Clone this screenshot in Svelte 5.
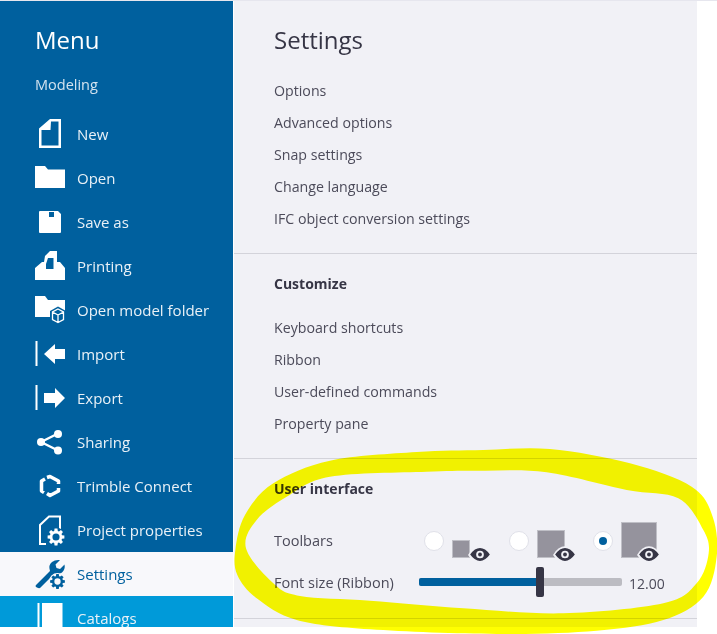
<script>
const menu = ['New', 'Open', 'Save as', 'Printing', 'Open model folder', 'Import', 'Export', 'Sharing', 'Trimble Connect', 'Project properties', 'Settings', 'Catalogs'];
const general = ['Options', 'Advanced options', 'Snap settings', 'Change language', 'IFC object conversion settings'];
const customize = ['Keyboard shortcuts', 'Ribbon', 'User-defined commands', 'Property pane'];
const toolbars = [
	{ size: 'small', checked: false },
	{ size: 'medium', checked: false },
	{ size: 'large', checked: true }
];

// freehand highlighter, points read off the reference
const outer = [[960,27],[760,30],[560,36],[300,62],[130,130],[45,225],[16,330],[22,405],[80,475],[200,540],[420,568],[800,582],[1100,572],[1300,540],[1420,470],[1460,350],[1448,230],[1385,140],[1200,70]];
const inner = [[950,97],[760,92],[590,95],[300,110],[170,170],[80,240],[48,325],[130,430],[210,468],[420,482],[700,505],[1000,520],[1300,490],[1400,430],[1436,340],[1420,270],[1345,175],[1190,150]];

function smooth(pts) {
	let d = `M${pts[0][0]} ${pts[0][1]}`;
	const n = pts.length;
	for (let i = 0; i < n; i++) {
		const p0 = pts[(i - 1 + n) % n], p1 = pts[i], p2 = pts[(i + 1) % n], p3 = pts[(i + 2) % n];
		const c1 = [p1[0] + (p2[0] - p0[0]) / 6, p1[1] + (p2[1] - p0[1]) / 6];
		const c2 = [p2[0] - (p3[0] - p1[0]) / 6, p2[1] - (p3[1] - p1[1]) / 6];
		d += `C${c1[0]} ${c1[1]} ${c2[0]} ${c2[1]} ${p2[0]} ${p2[1]}`;
	}
	return d + 'Z';
}
const highlight = smooth(outer) + smooth(inner);

// eight tooth gear with a round hole
function gearPath(cx, cy, r) {
	const hole = r * 0.42;
	let d = '';
	for (let i = 0; i < 8; i++) {
		const a = (i / 8) * Math.PI * 2;
		const w = 0.17;
		const pts = [[a - 0.39 + 0.1, r * 0.74], [a - w, r], [a + w, r], [a + 0.39 - 0.1, r * 0.74]];
		for (const [t, q] of pts) {
			d += `${d ? 'L' : 'M'}${(cx + Math.cos(t) * q).toFixed(2)} ${(cy + Math.sin(t) * q).toFixed(2)}`;
		}
	}
	d += `ZM${cx - hole} ${cy}a${hole} ${hole} 0 1 0 ${hole * 2} 0a${hole} ${hole} 0 1 0 ${-hole * 2} 0Z`;
	return d;
}
</script>

{#snippet gear(cx, cy, r, halo)}
	<circle cx={cx} cy={cy} r={r + 1} fill={halo} />
	<path d={gearPath(cx, cy, r)} fill-rule="evenodd" />
{/snippet}

{#snippet icon(name)}
	<svg class="icon" viewBox="0 0 30 30" width="30" height="30" fill="currentColor">
		{#if name === 'New'}
			<path fill-rule="evenodd" d="M15 0H26V29H4V9.500ZM16 2.500 15.500 11 6.500 11V26.500H23.500V2.500Z" />
		{:else if name === 'Open'}
			<path d="M0 3H10L13 6.500H30V25H0Z" />
		{:else if name === 'Save as'}
			<path fill-rule="evenodd" d="M5 4H23L26 7V25Q26 26 25 26H5Q4 26 4 25V5Q4 4 5 4ZM14 5V10H19V5Z" />
		{:else if name === 'Printing'}
			<path fill-rule="evenodd" d="M15 0H22V11H25L30 17V29H0V17L7 11H9L10 5ZM15.500 7H13L11 13V18H18.500V7Z" />
		{:else if name === 'Open model folder'}
			<path d="M0 1H10L13 5H30V22H0Z" />
			<path d="M23 11.500 31 16V25L23 30 15 25V16Z" fill="#00609e" />
			<path d="M23 14 28.500 17V24.500L23 27.500 17.500 24.500V17ZM23 20 28.500 17M23 20 17.500 17M23 20V27.500" fill="none" stroke="currentColor" stroke-width="1.300" />
		{:else if name === 'Import'}
			<rect x="0.500" y="2" width="2" height="25" />
			<path d="M9 15 20 5V10H30V20H20V25Z" />
		{:else if name === 'Export'}
			<rect x="0.500" y="2" width="2" height="25" />
			<path d="M9 10H20V5L30 15 20 25V20H9Z" />
		{:else if name === 'Sharing'}
			<path d="M6 15 23 6.500M6 15 23 23.500" stroke="currentColor" stroke-width="2.500" fill="none" />
			<circle cx="6" cy="15" r="4" />
			<circle cx="23" cy="7" r="4" />
			<circle cx="23" cy="23.500" r="4" />
		{:else if name === 'Trimble Connect'}
			<path d="M12 6.500 15 5.500 23.500 10V13M23.500 17V20L15 24.500 12 22.500M10 8 6.500 10V20L9 21.500" fill="none" stroke="currentColor" stroke-width="3.500" stroke-linejoin="round" />
		{:else if name === 'Project properties'}
			<path d="M25 14V1.500H14L5 10V29H11" fill="none" stroke="currentColor" stroke-width="2" />
			{@render gear(21, 22, 8.500, '#00609e')}
		{:else if name === 'Settings'}
			<path d="M1 26 15 12Q13 6 17 3 20 0.500 25 1L20.500 5.500 21.500 9 25 10 29.500 5.500Q30.500 10 27 13.500 23 16.500 18.500 15.500L5 29Q3 29.500 1 28 0 27 1 26Z" />
			{@render gear(22.500, 22.500, 7.500, '#f8f8fb')}
		{:else if name === 'Catalogs'}
			<rect x="2.500" y="0" width="2" height="30" />
			<rect x="7" y="0" width="20.500" height="30" />
		{/if}
	</svg>
{/snippet}

<div class="page">
	<aside class="sidebar">
		<h1>Menu</h1>
		<p class="context">Modeling</p>
		<ul>
			{#each menu as item}
				<li class:active={item === 'Settings'} class:next={item === 'Catalogs'}>
					{@render icon(item)}
					<span>{item}</span>
				</li>
			{/each}
		</ul>
	</aside>

	<main class="panel">
		<section class="first">
			<h2>Settings</h2>
			{#each general as link}
				<div class="link">{link}</div>
			{/each}
		</section>

		<section class="second">
			<h3>Customize</h3>
			{#each customize as link}
				<div class="link">{link}</div>
			{/each}
		</section>

		<section class="third">
			<h3>User interface</h3>
			<div class="toolbars">
				<span class="label">Toolbars</span>
				<div class="options">
					{#each toolbars as opt}
						<div class="option {opt.size}">
							<span class="radio" class:checked={opt.checked}></span>
							<span class="square">
								<svg class="eye" viewBox="0 0 28 19" width="24" height="17">
									<path d="M0 10Q6 0 14 0T28 10Q22 19 14 19T0 10Z" fill="#f1f1f6" />
									<path fill-rule="evenodd" d="M2.500 9.500Q8 2 14 2T25.500 9.500Q20 17 14 17T2.500 9.500ZM14 5A4.500 4.500 0 1 0 14 14 4.500 4.500 0 1 0 14 5Z" fill="#363545" />
									<circle cx="14" cy="9.500" r="2.200" fill="#363545" />
								</svg>
							</span>
						</div>
					{/each}
				</div>
			</div>
			<div class="fontsize">
				<span class="label">Font size (Ribbon)</span>
				<div class="slider">
					<div class="fill"></div>
					<div class="thumb"></div>
				</div>
				<span class="value">12.00</span>
			</div>
		</section>
		<section class="last"></section>
	</main>

	<svg class="marker" viewBox="0 0 717 634" width="717" height="634">
		<g transform="translate(230 440) scale(0.33333)">
			<path d={highlight} fill="#ffff00" fill-rule="evenodd" />
		</g>
	</svg>
</div>

<style>
:global(body) {
	margin: 0;
	background: #fff;
}
.page {
	position: relative;
	width: 717px;
	height: 634px;
	overflow: hidden;
	display: flex;
	align-items: flex-start;
	font-family: "Open Sans", "Noto Sans", sans-serif;
	border-top: 1px solid #e6e6ee;
	box-sizing: border-box;
}
.sidebar {
	width: 233px;
	height: 626px;
	flex: none;
	overflow: hidden;
	background: #00609e;
	color: #fff;
	font-size: 15px;
}
h1 {
	margin: 0;
	padding: 24px 0 0 35px;
	font-size: 24px;
	font-weight: 400;
	line-height: 30px;
}
.context {
	margin: 0;
	padding: 19px 0 0 35px;
	line-height: 22px;
	font-size: 14.5px;
	color: #d3e3ef;
}
ul {
	list-style: none;
	margin: 16px 0 0;
	padding: 0;
}
li {
	height: 44px;
	display: flex;
	align-items: center;
	gap: 12px;
	padding-left: 35px;
	color: #fff;
}
li span {
	color: #e9f1f7;
}
li.active {
	background: #f8f8fb;
	color: #00609e;
}
li.active span {
	color: #00609e;
}
li.next {
	background: #009ad9;
}
.icon {
	flex: none;
	overflow: visible;
}
.panel {
	width: 463px;
	height: 626px;
	flex: none;
	margin-left: 1px;
	background: #f1f1f6;
	color: #4c4b5a;
	overflow: hidden;
	font-size: 14.2px;
}
section {
	padding-left: 40px;
	border-bottom: 1px solid #d3d3da;
	box-sizing: border-box;
}
.first {
	height: 253px;
	padding-top: 24px;
}
.second {
	height: 205px;
	padding-top: 19px;
}
.third {
	height: 160px;
	padding-top: 19px;
}
.last {
	border: 0;
}
h2 {
	margin: 0 0 20px;
	font-size: 24px;
	font-weight: 400;
	line-height: 30px;
	color: #363545;
}
h3 {
	margin: 0 0 17px;
	font-size: 14px;
	font-weight: 700;
	line-height: 22px;
	color: #363545;
}
.link {
	height: 32px;
	line-height: 32px;
}
.toolbars {
	display: flex;
	align-items: flex-end;
	height: 50px;
	margin-top: -9px;
}
.label {
	width: 145px;
	flex: none;
	align-self: center;
	line-height: 22px;
	font-size: 14.5px;
}
.toolbars .label {
	align-self: flex-end;
	padding-bottom: 6px;
}
.options {
	display: flex;
	align-items: flex-end;
	height: 36px;
	margin-left: 5px;
}
.option {
	display: flex;
	align-items: flex-start;
	height: 36px;
}
.radio {
	width: 18px;
	height: 18px;
	margin-top: 9px;
	border: 1px solid #e0e1e9;
	border-radius: 50%;
	background: #fff;
	position: relative;
	box-sizing: content-box;
}
.option.small {
	margin-right: 39px;
}
.option.medium {
	margin-right: 28px;
}
.radio.checked::after {
	content: "";
	position: absolute;
	left: 5px;
	top: 5px;
	width: 8px;
	height: 8px;
	border-radius: 50%;
	background: #00609e;
}
.square {
	display: block;
	position: relative;
	background: #95939d;
	border: 1px solid #bfbfc6;
	box-sizing: border-box;
	margin-left: 8px;
}
.small .square {
	width: 18px;
	height: 18px;
	margin-top: 18px;
}
.medium .square {
	width: 28px;
	height: 28px;
	margin-top: 8px;
}
.large .square {
	width: 36px;
	height: 36px;
}
.eye {
	position: absolute;
	right: -23px;
	bottom: -6px;
}
.medium .eye {
	right: -13px;
}
.large .eye {
	right: -5px;
}
.fontsize {
	display: flex;
	align-items: center;
	height: 30px;
	margin-top: 10px;
}
.slider {
	position: relative;
	width: 203px;
	height: 8px;
	flex: none;
	margin-top: -2px;
	border-radius: 2px;
	background: #bcbcc2;
}
.fill {
	width: 118px;
	height: 100%;
	border-radius: 2px 0 0 2px;
	background: #00609e;
}
.thumb {
	position: absolute;
	left: 117px;
	top: -11px;
	width: 8px;
	height: 30px;
	border-radius: 2px;
	background: #363545;
}
.value {
	margin-left: 7px;
	font-size: 14px;
}
.marker {
	position: absolute;
	left: 0;
	top: -1px;
	mix-blend-mode: multiply;
	pointer-events: none;
}
</style>
